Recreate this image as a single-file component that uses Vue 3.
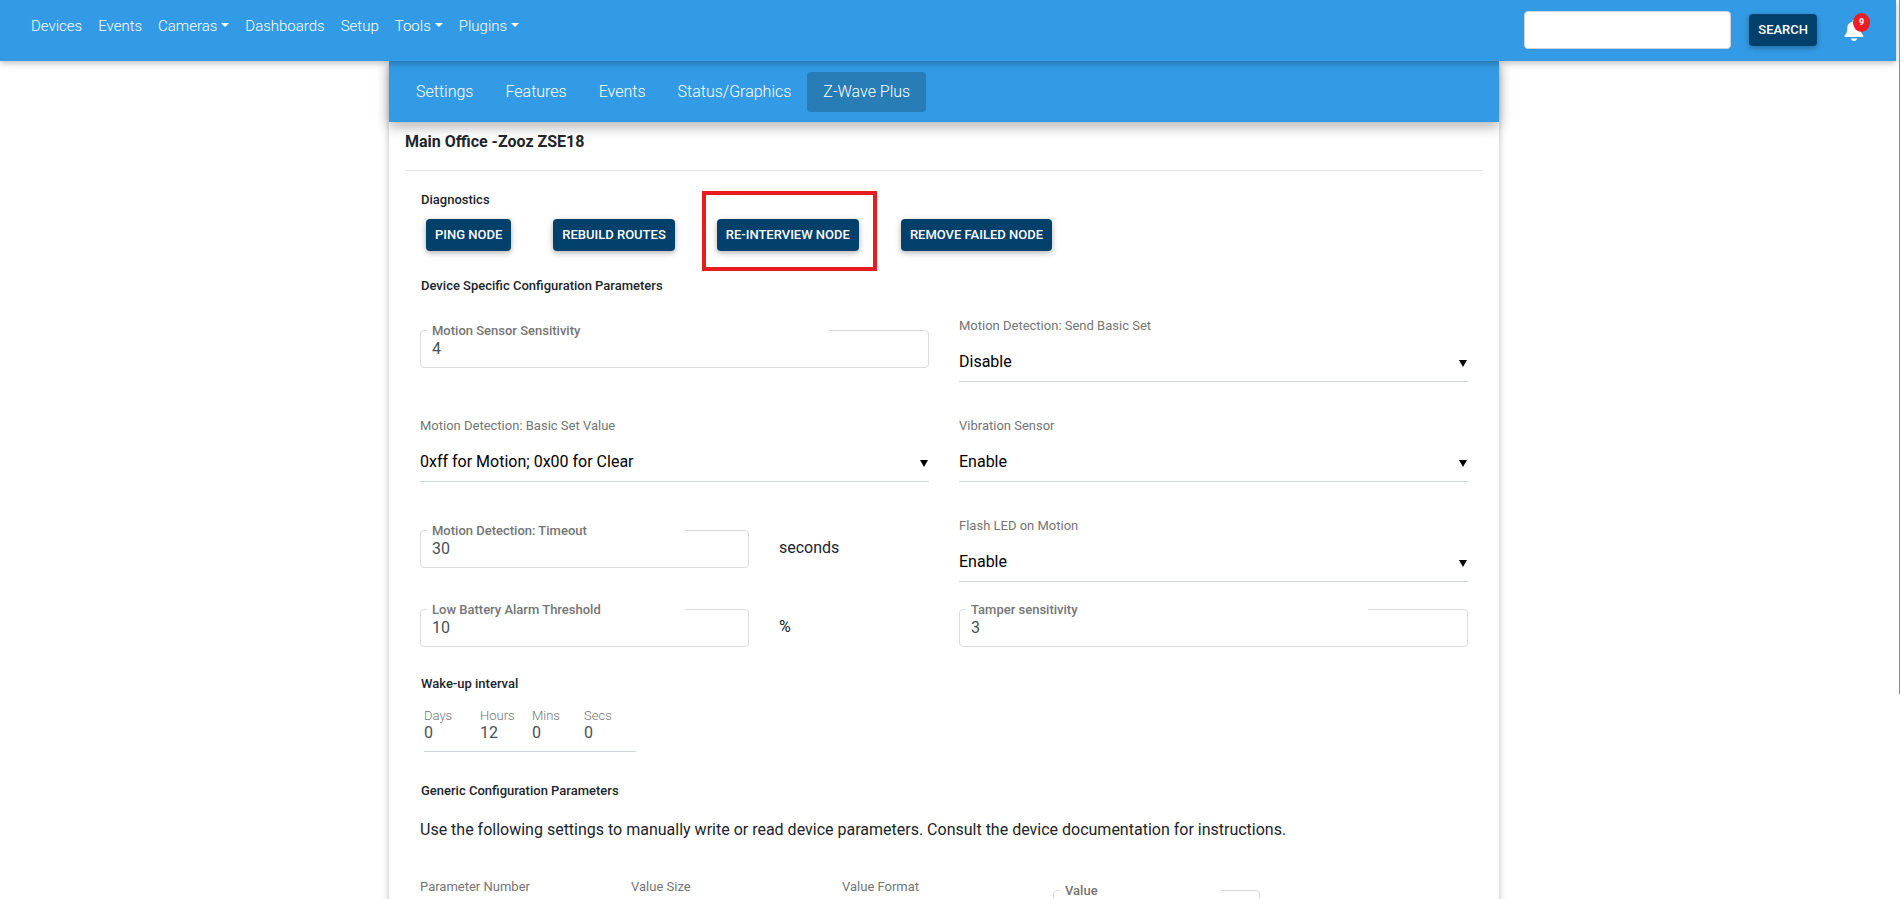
<script setup>
import { ref } from 'vue'

const mainLinks = [
  { label: 'Devices' },
  { label: 'Events' },
  { label: 'Cameras', menu: true },
  { label: 'Dashboards' },
  { label: 'Setup' },
  { label: 'Tools', menu: true },
  { label: 'Plugins', menu: true },
]
const tabs = ['Settings', 'Features', 'Events', 'Status/Graphics', 'Z-Wave Plus']
const activeTab = ref('Z-Wave Plus')
const query = ref('')

const sensitivity = ref('4')
const timeout = ref('30')
const battery = ref('10')
const tamper = ref('3')
const paramValue = ref('')

const wakeUp = ref([
  { label: 'Days', value: '0' },
  { label: 'Hours', value: '12' },
  { label: 'Mins', value: '0' },
  { label: 'Secs', value: '0' },
])
const genericSelects = ['Parameter Number', 'Value Size', 'Value Format']
</script>

<template>
  <div class="page">
    <header class="topbar">
      <nav class="main-nav">
        <a v-for="link in mainLinks" :key="link.label" href="#">
          {{ link.label }}<span v-if="link.menu" class="caret"></span>
        </a>
      </nav>
      <form class="search" @submit.prevent>
        <input v-model="query" type="text" aria-label="Search" />
        <button class="btn" type="submit">SEARCH</button>
        <a class="bell" href="#" aria-label="Notifications">
          <svg viewBox="0 0 20 22" width="20" height="22" aria-hidden="true">
            <path
              fill="#fff"
              d="M10 0.6c-.9 0-1.5.6-1.5 1.4v.8C5.400 3.400 3.300 5.900 3.300 9c0 4.200-.9 5.700-2.400 7.100-.9.900-.4 2 .7 2h16.800c1.100 0 1.600-1.100.7-2-1.500-1.400-2.400-2.900-2.400-7.100 0-3.100-2.100-5.600-5.200-6.200V2c0-.8-.6-1.400-1.500-1.400zM7 19.400h6c0 1.500-1.300 2.500-3 2.500s-3-1-3-2.500z"
            />
          </svg>
          <span class="badge">9</span>
        </a>
      </form>
    </header>

    <div class="scroll">
      <main class="card">
        <nav class="tabs">
          <a
            v-for="tab in tabs"
            :key="tab"
            href="#"
            :class="{ active: tab === activeTab }"
            @click.prevent="activeTab = tab"
            >{{ tab }}</a
          >
        </nav>

        <div class="body">
          <h1>Main Office -Zooz ZSE18</h1>
          <hr />

          <h2>Diagnostics</h2>
          <div class="actions">
            <button class="btn" type="button">PING NODE</button>
            <button class="btn" type="button">REBUILD ROUTES</button>
            <button class="btn marked" type="button">RE-INTERVIEW NODE</button>
            <button class="btn" type="button">REMOVE FAILED NODE</button>
          </div>

          <h2>Device Specific Configuration Parameters</h2>
          <div class="grid">
            <div class="outlined">
              <label for="sensitivity">Motion Sensor Sensitivity</label>
              <input id="sensitivity" v-model="sensitivity" type="text" />
            </div>
            <div class="choice">
              <label for="send-basic">Motion Detection: Send Basic Set</label>
              <select id="send-basic"><option>Disable</option></select>
            </div>
            <div class="choice">
              <label for="basic-value">Motion Detection: Basic Set Value</label>
              <select id="basic-value"><option>0xff for Motion; 0x00 for Clear</option></select>
            </div>
            <div class="choice">
              <label for="vibration">Vibration Sensor</label>
              <select id="vibration"><option>Enable</option></select>
            </div>
            <div class="with-unit">
              <div class="outlined">
                <label for="timeout">Motion Detection: Timeout</label>
                <input id="timeout" v-model="timeout" type="text" />
              </div>
              <span>seconds</span>
            </div>
            <div class="choice">
              <label for="flash">Flash LED on Motion</label>
              <select id="flash"><option>Enable</option></select>
            </div>
          </div>
          <div class="grid compact">
            <div class="with-unit">
              <div class="outlined">
                <label for="battery">Low Battery Alarm Threshold</label>
                <input id="battery" v-model="battery" type="text" />
              </div>
              <span>%</span>
            </div>
            <div class="outlined">
              <label for="tamper">Tamper sensitivity</label>
              <input id="tamper" v-model="tamper" type="text" />
            </div>
          </div>

          <h2>Wake-up interval</h2>
          <div class="interval">
            <div v-for="part in wakeUp" :key="part.label">
              <label :for="part.label">{{ part.label }}</label>
              <input :id="part.label" v-model="part.value" type="text" />
            </div>
          </div>

          <h2>Generic Configuration Parameters</h2>
          <p>
            Use the following settings to manually write or read device parameters. Consult the
            device documentation for instructions.
          </p>
          <div class="generic">
            <div v-for="(name, i) in genericSelects" :key="name" class="choice">
              <label :for="'generic' + i">{{ name }}</label>
              <select :id="'generic' + i"></select>
            </div>
            <div class="outlined">
              <label for="param-value">Value</label>
              <input id="param-value" v-model="paramValue" type="text" />
            </div>
          </div>
        </div>
      </main>
    </div>
    <div class="scroll-thumb"></div>
  </div>
</template>

<style>
body {
  margin: 0;
}
</style>

<style scoped>
* {
  box-sizing: border-box;
}
.page {
  position: relative;
  display: flex;
  flex-direction: column;
  height: 100vh;
  overflow: hidden;
  background: #fff;
  color: #212529;
  font: 400 16px/24px Roboto, sans-serif;
}
input,
select,
button {
  font: inherit;
}
a {
  color: #fff;
  text-decoration: none;
}
.topbar {
  position: relative;
  z-index: 2;
  display: flex;
  justify-content: space-between;
  height: 61px;
  flex: none;
  margin-right: 4px;
  padding: 0 32px 0 23px;
  background: #339be5;
  box-shadow: 0 2px 5px rgba(0, 0, 0, 0.16), 0 2px 10px rgba(0, 0, 0, 0.12);
}
.main-nav {
  display: flex;
  padding-top: 14px;
  font-size: 15px;
  font-weight: 300;
}
.main-nav a {
  padding: 0 8px;
}
.caret {
  display: inline-block;
  margin-left: 4px;
  vertical-align: 4px;
  border: 4px solid transparent;
  border-top-color: #fff;
  border-bottom: 0;
}
.search {
  display: flex;
  align-items: center;
  height: 60px;
}
.search input {
  width: 207px;
  height: 38px;
  margin-right: 18px;
  padding: 6px 12px;
  border: 1px solid #ced4da;
  border-radius: 4px;
  outline: 0;
}
.btn {
  height: 32px;
  padding: 0 9px;
  border: 0;
  border-radius: 4px;
  background: #00406a;
  box-shadow: 0 2px 5px rgba(0, 0, 0, 0.2), 0 2px 8px rgba(0, 0, 0, 0.12);
  color: #fff;
  font-size: 13px;
  line-height: 32px;
  font-weight: 500;
}
.bell {
  position: relative;
  display: block;
  height: 22px;
  margin-left: 27px;
  line-height: 0;
}
.badge {
  position: absolute;
  top: -6px;
  right: -6px;
  width: 17px;
  height: 19px;
  border-radius: 50%;
  background: #ee1c25;
  color: #fff;
  font-size: 9px;
  line-height: 19px;
  font-weight: 700;
  text-align: center;
}
.scroll {
  flex: 1;
  min-height: 0;
  padding-right: 12px;
  overflow-y: auto;
  scrollbar-width: none;
}
.card {
  max-width: 1110px;
  margin: 0 auto;
  padding-bottom: 32px;
  background: #fff;
  box-shadow: 0 2px 5px rgba(0, 0, 0, 0.16), 0 2px 10px rgba(0, 0, 0, 0.12);
}
.tabs {
  display: flex;
  align-items: center;
  height: 61px;
  padding: 0 11px;
  background: #339be5;
  box-shadow: 0 5px 11px rgba(0, 0, 0, 0.18), 0 4px 15px rgba(0, 0, 0, 0.15);
  font-weight: 300;
}
.tabs a {
  padding: 8px 16px;
  border-radius: 4px;
}
.tabs .active {
  background: #287db7;
}
.body {
  padding: 8px 16px 0;
}
h1 {
  margin: 0;
  font-size: 16px;
  line-height: 24px;
  font-weight: 700;
}
hr {
  margin: 16px 0 19px;
  border: 0;
  border-top: 1px solid #e5e5e5;
}
h2 {
  margin: 0 16px;
  font-size: 13px;
  line-height: 20px;
  font-weight: 500;
}
.actions {
  display: flex;
  gap: 42px;
  margin: 9px 21px 25px;
}
.marked {
  position: relative;
}
.marked::after {
  content: '';
  position: absolute;
  inset: -28px -18px -20px -15px;
  border: 4px solid #e71c1f;
}
.grid {
  display: grid;
  grid-template-columns: 1fr 1fr;
  gap: 33px 30px;
  margin: 19px 15px 0;
}
.grid.compact {
  margin: 27px 15px;
}
.outlined {
  position: relative;
  height: 38px;
}
.grid:not(.compact) > .outlined {
  margin-top: 15px;
}
.generic > .outlined {
  margin-top: 14px;
}
.grid:not(.compact) > .with-unit {
  padding-top: 15px;
}
.outlined input {
  display: block;
  width: 100%;
  height: 38px;
  padding: 0 11px 2px;
  border: 1px solid #dadce0;
  border-radius: 4px;
  outline: 0;
  background: none;
  color: #495057;
}
.outlined label {
  position: absolute;
  top: -9px;
  left: 7px;
  width: calc(80% - 5px);
  padding-left: 5px;
  background: #fff;
  color: #757575;
  font-size: 13px;
  line-height: 20px;
  font-weight: 500;
  pointer-events: none;
}
.with-unit {
  display: flex;
  gap: 30px;
}
.with-unit .outlined {
  flex: 0 0 329px;
}
.with-unit span {
  line-height: 36px;
}
.choice {
  position: relative;
}
.choice label {
  display: block;
  margin-bottom: 6px;
  color: #757575;
  font-size: 13px;
  line-height: 22px;
}
.choice select {
  display: block;
  width: 100%;
  height: 39px;
  padding: 0 20px 0 0;
  appearance: none;
  border: 0;
  border-bottom: 1px solid #ced4da;
  border-radius: 0;
  outline: 0;
  background: none;
  color: #000;
}
.choice::after {
  content: '';
  position: absolute;
  right: 1px;
  bottom: 15px;
  border: 4px solid transparent;
  border-top: 7px solid #000;
  border-bottom: 0;
  pointer-events: none;
}
.interval {
  display: grid;
  grid-template-columns: 56px 52px 52px 52px;
  width: 212px;
  height: 44px;
  margin: 14px 19px 29px;
  border-bottom: 1px solid #ced4da;
}
.interval label {
  display: block;
  color: #757575;
  font-size: 13px;
  line-height: 16px;
  font-weight: 300;
}
.interval input {
  display: block;
  width: 40px;
  height: 18px;
  padding: 0;
  border: 0;
  outline: 0;
  color: #495057;
}
p {
  margin: 17px 15px 34px;
}
.generic {
  display: grid;
  grid-template-columns: 181px 181px 181px 207px;
  gap: 30px;
  margin: 0 15px;
}
.scroll-thumb {
  position: absolute;
  top: 0;
  right: 0;
  z-index: 3;
  width: 1px;
  height: 694px;
  background: #8b8b8b;
}
</style>
